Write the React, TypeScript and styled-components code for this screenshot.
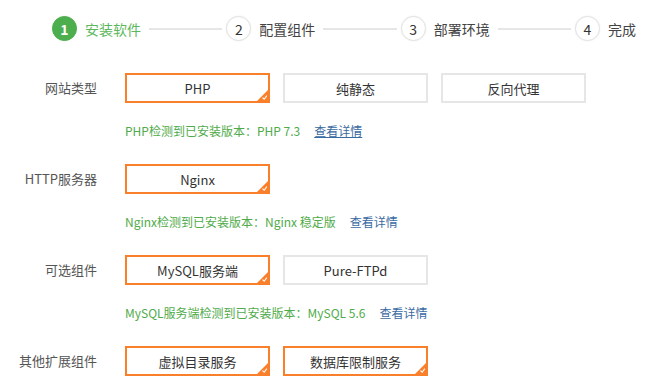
import React, { FC } from "react";
import styled, { createGlobalStyle } from "styled-components";

const GlobalStyle = createGlobalStyle`
  html, body {
    margin: 0;
    padding: 0;
    background: #ffffff;
  }
  body {
    font-family: "Noto Sans CJK SC", "Noto Sans", sans-serif;
    color: #333;
  }
`;

const Page = styled.div`
  width: 653px;
  height: 391px;
  box-sizing: border-box;
  padding-top: 16px;
  overflow: hidden;
`;

// 步骤条
const Steps = styled.div`
  display: flex;
  align-items: center;
  height: 25px;
  padding: 0 17px 0 52px;
`;

const Step = styled.div`
  display: flex;
  align-items: center;
  gap: 8px;
  flex-shrink: 0;
`;

const Circle = styled.div<{ active?: boolean }>`
  width: 25px;
  height: 25px;
  box-sizing: border-box;
  border-radius: 50%;
  display: flex;
  justify-content: center;
  align-items: center;
  font-size: 14px;
  font-weight: ${(p) => (p.active ? 700 : 400)};
  color: ${(p) => (p.active ? "#ffffff" : "#333")};
  background: ${(p) => (p.active ? "#4cae4c" : "#ffffff")};
  border: 1px solid ${(p) => (p.active ? "#4cae4c" : "#e2e2e2")};
  box-shadow: 0 0 2px rgba(0, 0, 0, 0.08);
`;

const StepLabel = styled.span<{ active?: boolean }>`
  font-size: 14px;
  color: ${(p) => (p.active ? "#5cb85c" : "#444")};
  white-space: nowrap;
`;

const Connector = styled.div`
  flex: 1;
  height: 2px;
  background: #e6e6e6;
  margin: 0 4px 0 8px;
`;

// 表单
const Form = styled.div`
  margin-top: 32px;
`;

const Section = styled.div`
  display: grid;
  grid-template-columns: 97px 1fr;
  column-gap: 28px;
  row-gap: 20px;
  margin-bottom: 25px;
`;

const Label = styled.div`
  font-size: 13px;
  line-height: 30px;
  color: #555;
  text-align: right;
  white-space: nowrap;
`;

const Options = styled.div`
  display: flex;
  gap: 13px;
`;

const Option = styled.div<{ selected?: boolean }>`
  position: relative;
  width: 145px;
  height: 30px;
  box-sizing: border-box;
  border: 2px solid ${(p) => (p.selected ? "#fa7f2a" : "#e6e6e6")};
  background: #ffffff;
  display: flex;
  justify-content: center;
  align-items: center;
  font-size: 13px;
  color: #333;
  cursor: pointer;
`;

const Corner = styled.svg`
  position: absolute;
  right: 0;
  bottom: 0;
  width: 11px;
  height: 11px;
`;

const Info = styled.div`
  grid-column: 2;
  font-size: 12px;
  line-height: 16px;
  color: #4fab4a;
  white-space: nowrap;
`;

const Detail = styled.a<{ underline?: boolean }>`
  margin-left: 14px;
  color: #3a6aa2;
  text-decoration: ${(p) => (p.underline ? "underline" : "none")};
  cursor: pointer;
`;

interface OptionItem {
  name: string;
  selected?: boolean;
}

interface SectionItem {
  label: string;
  options: OptionItem[];
  info?: string;
  underline?: boolean;
}

const sections: SectionItem[] = [
  {
    label: "网站类型",
    options: [{ name: "PHP", selected: true }, { name: "纯静态" }, { name: "反向代理" }],
    info: "PHP检测到已安装版本：PHP 7.3",
    underline: true,
  },
  {
    label: "HTTP服务器",
    options: [{ name: "Nginx", selected: true }],
    info: "Nginx检测到已安装版本：Nginx 稳定版",
  },
  {
    label: "可选组件",
    options: [{ name: "MySQL服务端", selected: true }, { name: "Pure-FTPd" }],
    info: "MySQL服务端检测到已安装版本：MySQL 5.6",
  },
  {
    label: "其他扩展组件",
    options: [
      { name: "虚拟目录服务", selected: true },
      { name: "数据库限制服务", selected: true },
    ],
  },
];

const steps = ["安装软件", "配置组件", "部署环境", "完成"];

const CheckCorner: FC = () => (
  <Corner viewBox="0 0 11 11">
    <polygon points="11,0 11,11 0,11" fill="#fa7f2a" />
    <polyline
      points="5.5,7.6 7.2,9.2 9.8,5.6"
      fill="none"
      stroke="#ffffff"
      strokeWidth="1.1"
    />
  </Corner>
);

const App: FC = () => {
  return (
    <Page>
      <GlobalStyle />
      <Steps>
        {steps.map((s, i) => (
          <React.Fragment key={s}>
            {i > 0 && <Connector />}
            <Step>
              <Circle active={i === 0}>{i + 1}</Circle>
              <StepLabel active={i === 0}>{s}</StepLabel>
            </Step>
          </React.Fragment>
        ))}
      </Steps>

      <Form>
        {sections.map((sec) => (
          <Section key={sec.label}>
            <Label>{sec.label}</Label>
            <Options>
              {sec.options.map((o) => (
                <Option key={o.name} selected={o.selected}>
                  {o.name}
                  {o.selected && <CheckCorner />}
                </Option>
              ))}
            </Options>
            {sec.info && (
              <Info>
                {sec.info}
                <Detail underline={sec.underline}>查看详情</Detail>
              </Info>
            )}
          </Section>
        ))}
      </Form>
    </Page>
  );
};

export default App;
